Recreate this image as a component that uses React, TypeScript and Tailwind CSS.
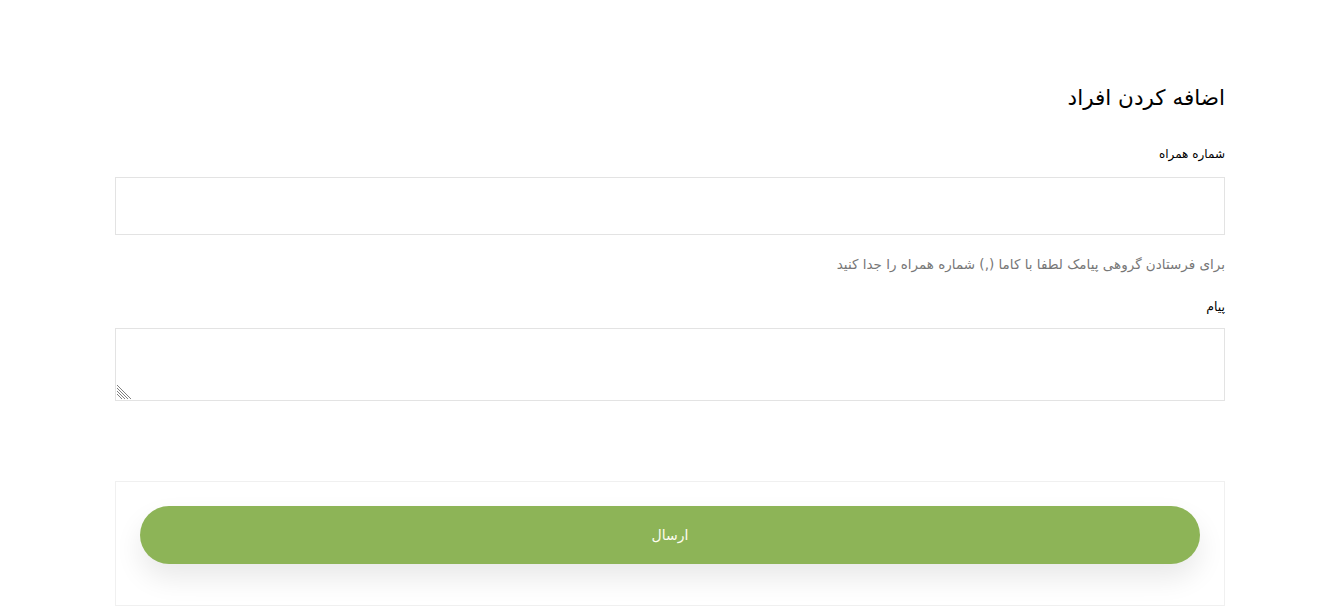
import React from "react";

export default function App() {
  return (
    <div dir="rtl" className="min-h-[613px] w-full bg-white" style={{ fontFamily: '"DejaVu Sans", "Noto Sans", sans-serif' }}>
      <div className="mr-[108px] ml-auto w-[1110px] pt-[83px]">
        <h2 className="text-[21.5px] leading-[30px] text-black">اضافه کردن افراد</h2>
        <label className="mt-[32px] block text-[12px] leading-[18px] text-black">شماره همراه</label>
        <input type="text" className="mt-[14px] block h-[58px] w-full border border-[#e3e3e3] bg-white outline-none" />
        <p className="mt-[19px] text-[13.5px] leading-[20px] text-[#777]">برای فرستادن گروهی پیامک لطفا با کاما (,) شماره همراه را جدا کنید</p>
        <label className="mt-[24px] block text-[12.5px] leading-[18px] text-black">پیام</label>
        <div className="relative mt-[12px]">
          <textarea className="block h-[73px] w-full resize-none border border-[#e3e3e3] bg-white outline-none" />
          <svg className="pointer-events-none absolute bottom-[1px] left-[1px]" width="16" height="16" viewBox="0 0 16 16">
            <g stroke="#808080" strokeWidth="1" shapeRendering="crispEdges">
              <line x1="1" y1="1" x2="15" y2="15" />
              <line x1="1" y1="4" x2="12" y2="15" />
              <line x1="1" y1="7" x2="9" y2="15" />
              <line x1="1" y1="10" x2="6" y2="15" />
            </g>
          </svg>
        </div>
        <div className="mt-[80px] border border-[#f0f0f0] px-[24px] py-[24px]">
          <button className="flex h-[58px] w-full items-center justify-center rounded-full bg-[#8db457] text-[14px] text-[#fdfdf0] shadow-[0_14px_28px_rgba(0,0,0,0.09)]">
            ارسال
          </button>
          <div className="h-[17px]" />
        </div>
      </div>
    </div>
  );
}
